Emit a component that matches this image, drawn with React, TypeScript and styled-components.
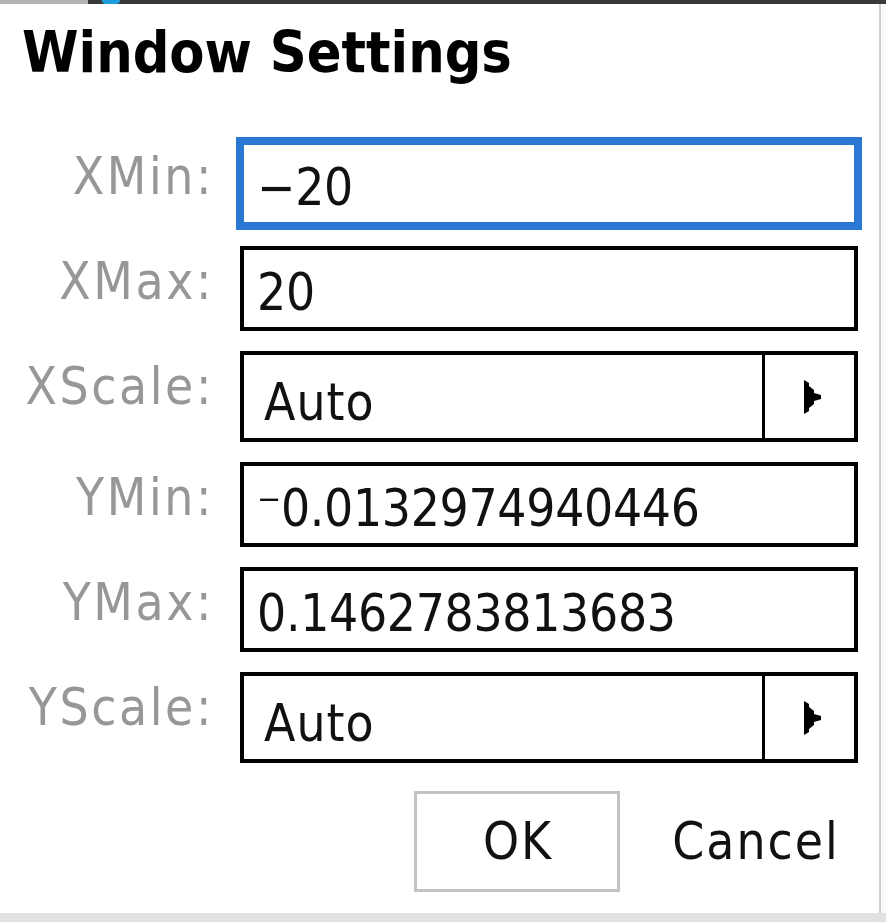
import * as React from "react";
import styled, { createGlobalStyle } from "styled-components";

const GlobalStyle = createGlobalStyle`
	html, body {
		margin: 0;
		padding: 0;
		background: #ffffff;
	}
	body {
		font-family: "DejaVu Sans Condensed", "DejaVu Sans", sans-serif;
		font-stretch: condensed;
		color: #111;
	}
`;

const StyledPage = styled.div`
	width: 886px;
	height: 922px;
	display: flex;
	flex-direction: column;
	overflow: hidden;
`;

const StyledTopStrip = styled.div`
	height: 4px;
	display: flex;
	background: #393939;
`;

const StyledStripPiece = styled.div<{ $width: number; $color: string; $round?: boolean }>`
	width: ${p => p.$width}px;
	margin-right: ${p => (p.$round ? 0 : 14)}px;
	background: ${p => p.$color};
	border-radius: ${p => (p.$round ? "0 0 9px 9px" : "0")};
`;

const StyledMiddle = styled.div`
	flex: 1;
	display: flex;
`;

const StyledDialog = styled.div`
	width: 881px;
	background: #fff;
	border-right: 2px solid #cfcfcf;
	padding-top: 20px;
	box-sizing: border-box;
`;

const StyledTitle = styled.h1`
	margin: 0;
	padding-left: 22px;
	font-size: 57px;
	line-height: 57px;
	font-weight: bold;
	color: #000;
`;

const StyledForm = styled.div`
	margin-top: 60px;
	display: grid;
	grid-template-columns: 212px 618px;
	column-gap: 28px;
	row-gap: 20px;
`;

const StyledLabel = styled.div`
	text-align: right;
	font-size: 51px;
	line-height: 51px;
	letter-spacing: 2.6px;
	margin-right: -2px;
	color: #979797;
	padding-top: 10px;
	white-space: nowrap;
`;

const StyledField = styled.div<{ $focused?: boolean }>`
	height: 85px;
	box-sizing: border-box;
	border: 4px solid ${p => (p.$focused ? "#2a78d3" : "#000")};
	box-shadow: ${p => (p.$focused ? "0 0 0 4px #2a78d3" : "none")};
	padding: 17px 13px 0;
	font-size: 51px;
	line-height: 51px;
	letter-spacing: -0.3px;
	color: #111;
	white-space: nowrap;
`;

const StyledSelect = styled.div`
	height: 91px;
	box-sizing: border-box;
	border: 4px solid #000;
	display: flex;
`;

const StyledSelectValue = styled.div`
	flex: 1;
	padding: 22px 18px 0 20px;
	font-size: 51px;
	line-height: 51px;
	letter-spacing: 1px;
	color: #111;
	border-right: 3px solid #000;
`;

const StyledSelectArrow = styled.div`
	width: 89px;
	display: flex;
	align-items: center;
	justify-content: center;
	padding-left: 6px;
	box-sizing: border-box;
`;

const StyledButtons = styled.div`
	margin-top: 28px;
	display: flex;
	justify-content: flex-end;
	gap: 32px;
	padding-right: 21px;
`;

const StyledButton = styled.button<{ $bordered?: boolean }>`
	width: 206px;
	height: 101px;
	box-sizing: border-box;
	border: 3px solid ${p => (p.$bordered ? "#c2c2c2" : "transparent")};
	background: #fff;
	font-family: inherit;
	font-stretch: condensed;
	font-size: 51px;
	line-height: 51px;
	letter-spacing: 2px;
	color: #111;
	padding: 0 0 0 2px;
	display: flex;
	align-items: center;
	justify-content: center;
`;

const StyledSideGap = styled.div`
	flex: 1;
	background: #fafafa;
`;

const StyledBottomStrip = styled.div`
	height: 9px;
	background: #e2e2e2;
`;

const Arrow = () => (
	<svg width="17" height="34" viewBox="0 0 17 34">
		<polygon points="0,0 5,3 5,6 10,10 10,13 17,15 17,19 10,21 10,24 5,28 5,31 0,34" fill="#000" />
	</svg>
);

type Row =
	| { label: string; kind: "text"; value: string; focused?: boolean }
	| { label: string; kind: "select"; value: string };

const ROWS: Row[] = [
	{ label: "XMin:", kind: "text", value: "\u221220", focused: true },
	{ label: "XMax:", kind: "text", value: "20" },
	{ label: "XScale:", kind: "select", value: "Auto" },
	{ label: "YMin:", kind: "text", value: "\u207B0.0132974940446" },
	{ label: "YMax:", kind: "text", value: "0.1462783813683" },
	{ label: "YScale:", kind: "select", value: "Auto" },
];

export default function App() {
	return (
		<StyledPage>
			<GlobalStyle />
			<StyledTopStrip>
				<StyledStripPiece $width={88} $color="#b4b4b4" />
				<StyledStripPiece $width={18} $color="#1c9fdc" $round />
			</StyledTopStrip>
			<StyledMiddle>
				<StyledDialog>
					<StyledTitle>Window Settings</StyledTitle>
					<StyledForm>
						{ROWS.map(row => (
							<React.Fragment key={row.label}>
								<StyledLabel>{row.label}</StyledLabel>
								{row.kind === "text" ? (
									<StyledField $focused={row.focused}>{row.value}</StyledField>
								) : (
									<StyledSelect>
										<StyledSelectValue>{row.value}</StyledSelectValue>
										<StyledSelectArrow>
											<Arrow />
										</StyledSelectArrow>
									</StyledSelect>
								)}
							</React.Fragment>
						))}
					</StyledForm>
					<StyledButtons>
						<StyledButton $bordered>OK</StyledButton>
						<StyledButton>Cancel</StyledButton>
					</StyledButtons>
				</StyledDialog>
				<StyledSideGap />
			</StyledMiddle>
			<StyledBottomStrip />
		</StyledPage>
	);
}
